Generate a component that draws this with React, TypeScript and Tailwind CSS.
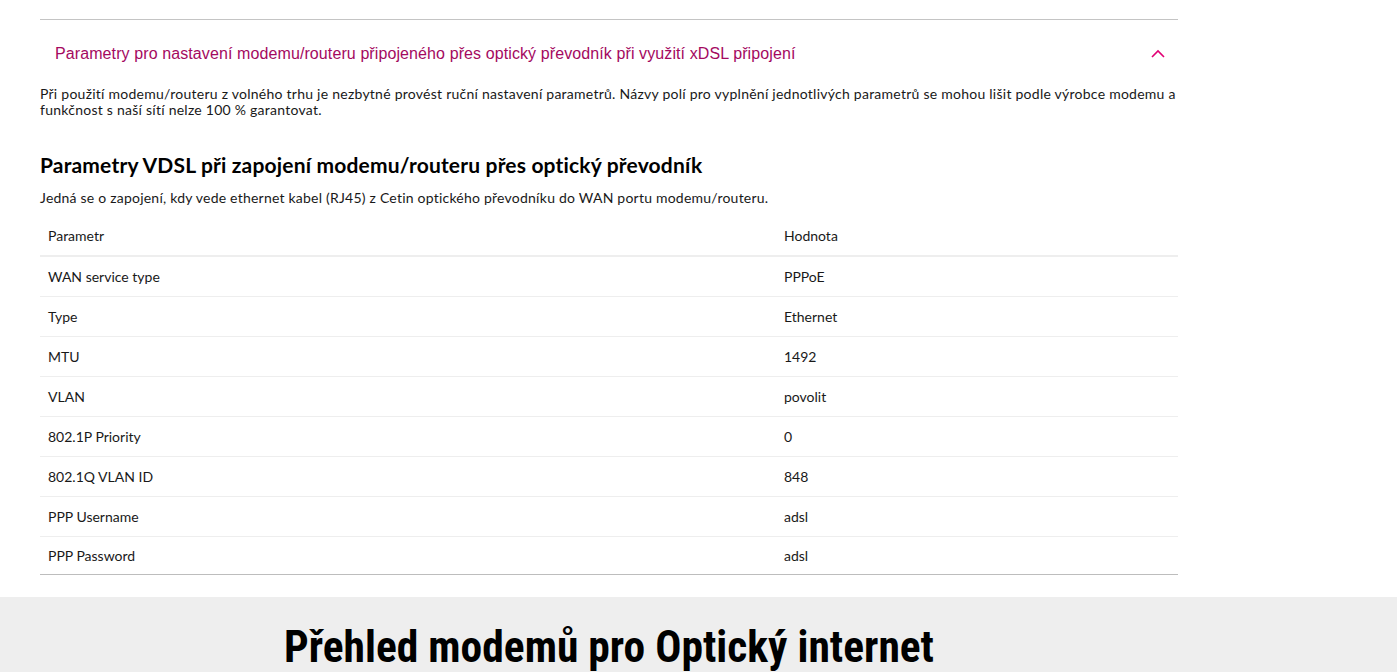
const rows: [string, string][] = [
  ['WAN service type', 'PPPoE'],
  ['Type', 'Ethernet'],
  ['MTU', '1492'],
  ['VLAN', 'povolit'],
  ['802.1P Priority', '0'],
  ['802.1Q VLAN ID', '848'],
  ['PPP Username', 'adsl'],
  ['PPP Password', 'adsl'],
]

const App = () => {
  return (
    <div className="min-h-screen bg-white text-[#191919] font-['Lato','Noto_Sans',sans-serif]">
      <div className="w-[1138px] ml-[40px]">
        <div className="h-[20px] border-b border-[#c4c4c4]" />

        <div className="flex items-center justify-between h-[66px] pl-[15px] pr-[12px] pt-[2px]">
          <span className="font-['Liberation_Sans',Arial,sans-serif] text-[16px] tracking-[0.1px] text-[#a4095f]">
            Parametry pro nastavení modemu/routeru připojeného přes optický převodník při využití xDSL připojení
          </span>
          <svg width="16" height="10" viewBox="0 0 16 10" fill="none">
            <path d="M2 8 L8 2 L14 8" stroke="#e20074" strokeWidth="1.6" />
          </svg>
        </div>

        <p className="text-[14px] leading-[16px] tracking-[0.25px] pr-[1px]">
          Při použití modemu/routeru z volného trhu je nezbytné provést ruční nastavení parametrů. Názvy polí pro vyplnění jednotlivých parametrů se mohou lišit podle výrobce modemu a funkčnost s naší sítí nelze 100 % garantovat.
        </p>

        <h2 className="mt-[34px] text-[21px] leading-[26px] tracking-[0.17px] font-bold text-black">
          Parametry VDSL při zapojení modemu/routeru přes optický převodník
        </h2>
        <p className="mt-[12px] text-[14px] leading-[16px] tracking-[0.22px]">
          Jedná se o zapojení, kdy vede ethernet kabel (RJ45) z Cetin optického převodníku do WAN portu modemu/routeru.
        </p>

        <table className="mt-[10px] w-full text-[14px] border-b border-[#bdbdbd]">
          <thead>
            <tr className="h-[40px] border-b-2 border-[#eeeeee]">
              <th className="w-[736px] pl-[8px] text-left font-normal">Parametr</th>
              <th className="pl-[8px] text-left font-normal">Hodnota</th>
            </tr>
          </thead>
          <tbody>
            {rows.map(([k, v], i) => (
              <tr key={k} className={i < rows.length - 1 ? 'h-[40px] border-b border-[#eeeeee]' : 'h-[38px]'}>
                <td className="pl-[8px]">{k}</td>
                <td className="pl-[8px]">{v}</td>
              </tr>
            ))}
          </tbody>
        </table>
      </div>

      <div className="mt-[22px] bg-[#eeeeee] pt-[28px] h-[76px]">
        <div className="w-[1138px] ml-[40px] text-center">
          <h2 className="font-['Liberation_Sans_Narrow','Roboto_Condensed',Roboto,sans-serif] font-bold text-[43.5px] leading-[46px] text-black">
            Přehled modemů pro Optický internet
          </h2>
        </div>
      </div>
    </div>
  )
}

export default App
